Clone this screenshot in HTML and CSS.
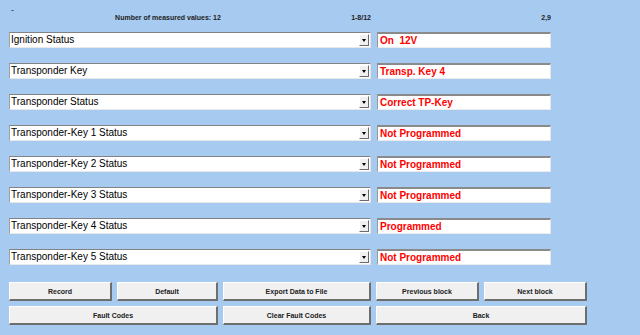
FILE: index.html
```html
<!DOCTYPE html>
<html>
<head>
<meta charset="utf-8">
<link rel="stylesheet" href="styles.css">
</head>
<body>
<div class="page">
  <div class="dash">-</div>
  <div class="header">
    <div class="h-count">Number of measured values: 12</div>
    <div class="h-range">1-8/12</div>
    <div class="h-time">2,9</div>
  </div>
  <div class="rows">
    <div class="row"><div class="combo"><span class="combo-text">Ignition Status</span><span class="drop"></span></div><div class="value">On&nbsp; 12V</div></div>
    <div class="row"><div class="combo"><span class="combo-text">Transponder Key</span><span class="drop"></span></div><div class="value">Transp. Key 4</div></div>
    <div class="row"><div class="combo"><span class="combo-text">Transponder Status</span><span class="drop"></span></div><div class="value">Correct TP-Key</div></div>
    <div class="row"><div class="combo"><span class="combo-text">Transponder-Key 1 Status</span><span class="drop"></span></div><div class="value">Not Programmed</div></div>
    <div class="row"><div class="combo"><span class="combo-text">Transponder-Key 2 Status</span><span class="drop"></span></div><div class="value">Not Programmed</div></div>
    <div class="row"><div class="combo"><span class="combo-text">Transponder-Key 3 Status</span><span class="drop"></span></div><div class="value">Not Programmed</div></div>
    <div class="row"><div class="combo"><span class="combo-text">Transponder-Key 4 Status</span><span class="drop"></span></div><div class="value">Programmed</div></div>
    <div class="row"><div class="combo"><span class="combo-text">Transponder-Key 5 Status</span><span class="drop"></span></div><div class="value">Not Programmed</div></div>
  </div>
  <div class="buttons">
    <button class="btn">Record</button>
    <button class="btn">Default</button>
    <button class="btn">Export Data to File</button>
    <button class="btn">Previous block</button>
    <button class="btn">Next block</button>
    <button class="btn span2">Fault Codes</button>
    <button class="btn">Clear Fault Codes</button>
    <button class="btn span2">Back</button>
  </div>
</div>
</body>
</html>
```
FILE: styles.css
```css
html, body {
  margin: 0;
  padding: 0;
  background: #a6caf0;
  font-family: "Liberation Sans", Arial, sans-serif;
}
.page {
  width: 640px;
  height: 335px;
  padding: 0 0 0 9px;
  box-sizing: border-box;
  position: relative;
}
.dash {
  position: absolute;
  left: 11px;
  top: 5px;
  font-size: 9px;
  line-height: 10px;
  color: #333;
}
.header {
  display: grid;
  grid-template-columns: 318px 44px 180px;
  height: 32px;
  align-items: center;
  font-size: 7px;
  font-weight: bold;
  color: #222;
  padding-top: 3px;
  box-sizing: border-box;
}
.h-count { text-align: center; }
.h-range { text-align: right; }
.h-time { text-align: right; }
.rows {
  display: flex;
  flex-direction: column;
  gap: 15px;
}
.row {
  display: grid;
  grid-template-columns: 362px 174px;
  column-gap: 6px;
  height: 16px;
}
.combo {
  display: flex;
  align-items: center;
  background: #fff;
  border-top: 1px solid #828282;
  border-left: 1px solid #a0a0a0;
  border-right: 1px solid #e3e3e3;
  border-bottom: 1px solid #e8e8e8;
  box-sizing: border-box;
  height: 16px;
}
.combo-text {
  flex: 1;
  font-size: 10px;
  color: #000;
  padding-left: 1px;
  white-space: nowrap;
  line-height: 14px;
}
.drop {
  width: 10px;
  height: 12px;
  margin-right: 1px;
  background: #f0f0f0;
  border-top: 1px solid #fff;
  border-left: 1px solid #fff;
  border-right: 1px solid #6a6a6a;
  border-bottom: 1px solid #6a6a6a;
  box-sizing: border-box;
  position: relative;
}
.drop::after {
  content: "";
  position: absolute;
  left: 2px;
  top: 4px;
  border-left: 2px solid transparent;
  border-right: 2px solid transparent;
  border-top: 3px solid #000;
}
.value {
  background: #fff;
  border-top: 2px solid #8a8a8a;
  border-left: 1px solid #9a9a9a;
  border-right: 1px solid #e6e6e6;
  border-bottom: 1px solid #ececec;
  box-sizing: border-box;
  height: 16px;
  color: #ff0000;
  font-weight: bold;
  font-size: 10px;
  line-height: 13px;
  padding-left: 2px;
  white-space: nowrap;
}
.buttons {
  display: grid;
  grid-template-columns: 103px 101px 148px 103px 103px;
  column-gap: 5px;
  row-gap: 5px;
  margin-top: 17px;
}
.btn {
  font-family: "Liberation Sans", Arial, sans-serif;
  font-size: 7px;
  font-weight: bold;
  color: #222;
  background: #f0f0f0;
  border-top: 1px solid #fff;
  border-left: 1px solid #fff;
  border-right: 2px solid #6e6e6e;
  border-bottom: 2px solid #6e6e6e;
  height: 19px;
  padding: 0;
  margin: 0;
}
.span2 { grid-column: span 2; }
```
